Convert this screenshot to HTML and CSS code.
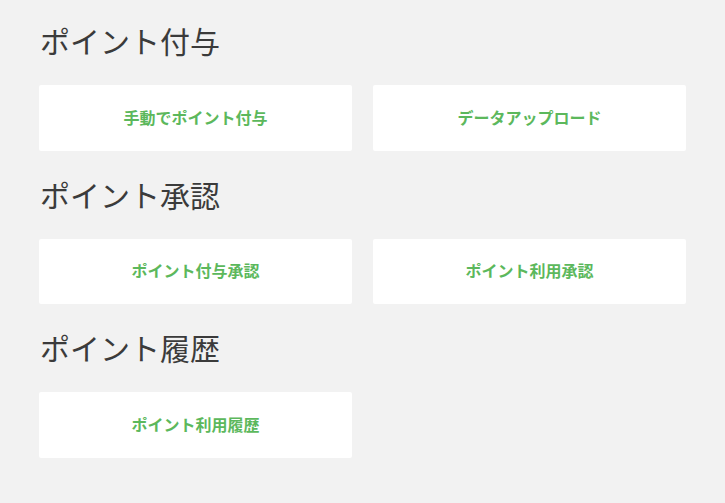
FILE: index.html
```html
<!DOCTYPE html>
<html lang="ja">
<head>
    <meta charset="UTF-8">
    <meta name="viewport" content="width=device-width, initial-scale=1.0">
    <title>ポイント管理</title>
    <link rel="stylesheet" href="styles.css">
</head>
<body>
    <div class="container">
        <section class="section">
            <h2 class="section-title">ポイント付与</h2>
            <div class="menu">
                <a href="#" class="menu-btn">手動でポイント付与</a>
                <a href="#" class="menu-btn">データアップロード</a>
            </div>
        </section>

        <section class="section">
            <h2 class="section-title">ポイント承認</h2>
            <div class="menu">
                <a href="#" class="menu-btn">ポイント付与承認</a>
                <a href="#" class="menu-btn">ポイント利用承認</a>
            </div>
        </section>

        <section class="section">
            <h2 class="section-title">ポイント履歴</h2>
            <div class="menu">
                <a href="#" class="menu-btn">ポイント利用履歴</a>
            </div>
        </section>
    </div>
</body>
</html>
```

FILE: styles.css
```css
body {
    margin: 0;
    background-color: #f2f2f2;
    font-family: "Noto Sans CJK JP", "Noto Sans", sans-serif;
    color: #3b3b3b;
}

.container {
    width: 647px;
    padding: 22px 39px;
}

.section {
    margin-bottom: 25px;
}

.section-title {
    margin: 0 0 27px 1px;
    font-size: 30px;
    font-weight: normal;
    line-height: 36px;
}

.menu {
    display: grid;
    grid-template-columns: 1fr 1fr;
    gap: 21px;
}

.menu-btn {
    display: flex;
    justify-content: center;
    align-items: center;
    height: 65.5px;
    padding-bottom: 2px;
    box-sizing: border-box;
    background-color: #fff;
    border-radius: 2px;
    color: #5cb85c;
    font-size: 16px;
    font-weight: bold;
    text-decoration: none;
}

.menu-btn:hover {
    background-color: #fafafa;
}
```
